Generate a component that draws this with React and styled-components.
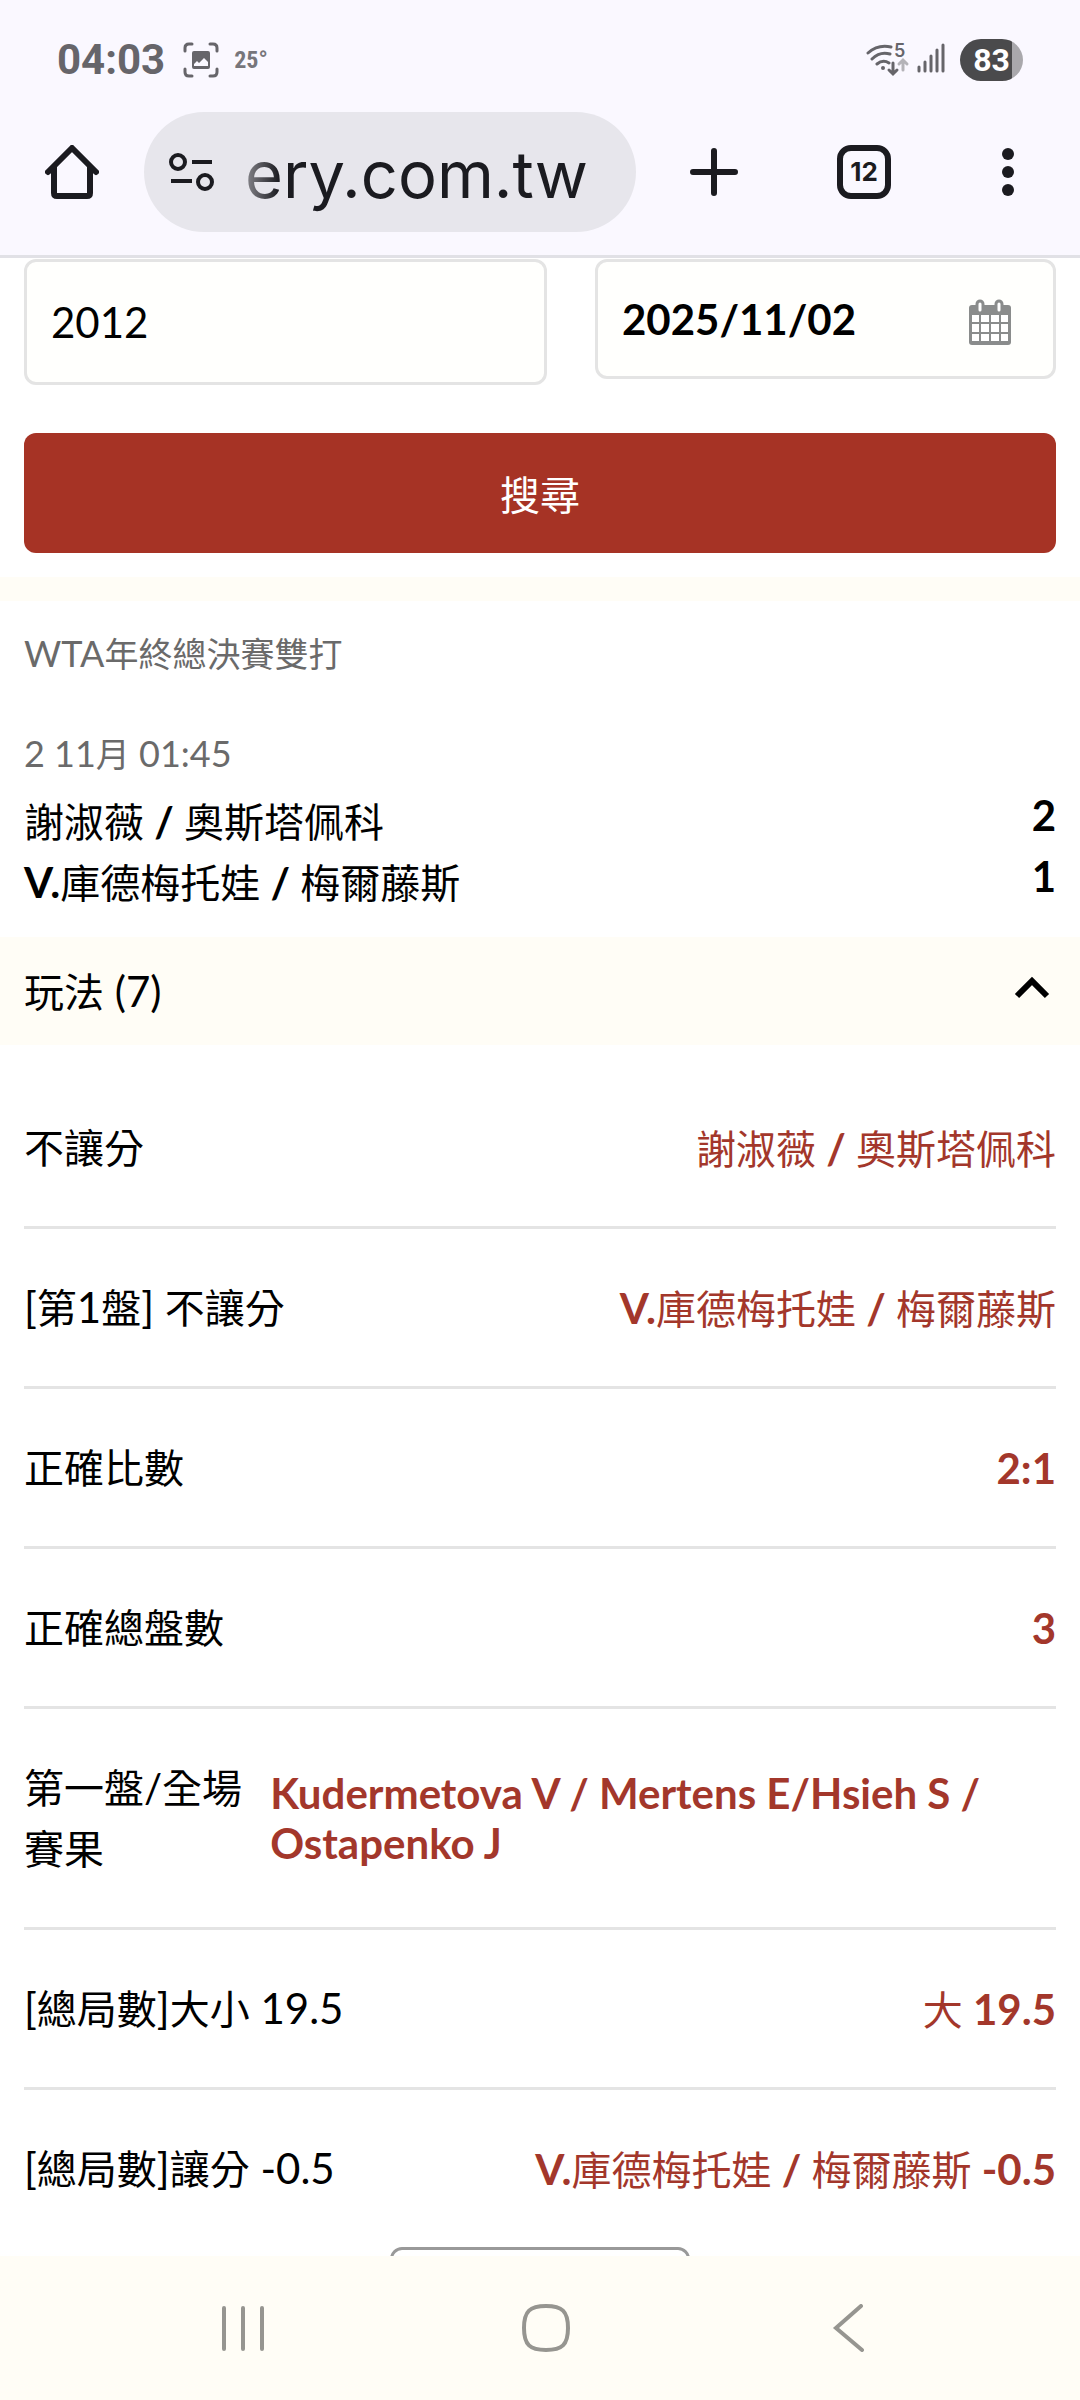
import React, { useState } from 'react';
import styled, { createGlobalStyle } from 'styled-components';

const results = [
  { label: '不讓分', value: '謝淑薇 / 奧斯塔佩科' },
  { label: '[第1盤] 不讓分', value: 'V.庫德梅托娃 / 梅爾藤斯' },
  { label: '正確比數', value: '2:1' },
  { label: '正確總盤數', value: '3' },
  { label: '第一盤/全場賽果', value: 'Kudermetova V / Mertens E/Hsieh S / Ostapenko J' },
  { label: '[總局數]大小 19.5', value: '大 19.5' },
  { label: '[總局數]讓分 -0.5', value: 'V.庫德梅托娃 / 梅爾藤斯 -0.5' },
];

// Chinese runs are set a little smaller and never bold
const Mixed = ({ text }) =>
  text
    .split(/([\u4e00-\u9fff]+(?:\/[\u4e00-\u9fff]+)*)/)
    .filter(Boolean)
    .map((run, i) => (/[\u4e00-\u9fff]/.test(run) ? <Han key={i}>{run}</Han> : run));

const StatusBar = () => (
  <Status>
    <StatusGroup>
      <Clock>04:03</Clock>
      <svg width="36" height="36" viewBox="0 0 36 36" fill="none" stroke="#66656a" strokeWidth="3" strokeLinecap="round">
        <path d="M2 9V6q0-4 4-4h3M27 2h3q4 0 4 4v3M34 27v3q0 4-4 4h-3M9 34H6q-4 0-4-4v-3" />
        <path
          d="M11 9h14q2 0 2 2v14q0 2-2 2H11q-2 0-2-2V11q0-2 2-2zM11 24h14v-4l-4-4-5 5-2-2-3 3z"
          fill="#66656a"
          fillRule="evenodd"
          stroke="none"
        />
      </svg>
      <Temperature>25°</Temperature>
    </StatusGroup>
    <StatusGroup>
      <svg width="79" height="50" viewBox="0 -8 79 50" fill="none" stroke="#66656a" strokeWidth="3" strokeLinecap="round">
        <path d="M2 10Q12 1 25 4M6 16Q14 8 24 11M11 21q6-5 12-1" />
        <circle cx="17" cy="25" r="2" fill="#66656a" stroke="none" />
        <path d="M27 20v10M23 27l4 4 4-4" />
        <path d="M37 27V18M33 21l4-4 4 4" stroke="#b4b3b8" />
        <path d="M53 28v-4M59 28v-9M65 28V13M71 28V7M77 28V2" />
        <WifiBand x="28" y="14">5</WifiBand>
      </svg>
      <Battery>83</Battery>
    </StatusGroup>
  </Status>
);

const Toolbar = () => (
  <Bar>
    <BarButton aria-label="首頁">
      <svg width="54" height="54" viewBox="0 0 54 54" fill="none" stroke="#1b1b20" strokeWidth="6" strokeLinecap="round" strokeLinejoin="round">
        <path d="M3 27L27 3l24 24M9 22v26q0 3 3 3h30q3 0 3-3V22" />
      </svg>
    </BarButton>
    <Address>
      <svg width="46" height="40" viewBox="0 0 46 40" fill="none" stroke="#1b1b20" strokeWidth="4">
        <circle cx="9" cy="10" r="7" />
        <path d="M23 10h20M2 29h21" />
        <circle cx="36" cy="30" r="7" />
      </svg>
      <Domain>ery.com.tw</Domain>
    </Address>
    <BarButton $wide aria-label="新分頁">
      <svg width="48" height="48" viewBox="0 0 48 48" stroke="#1b1b20" strokeWidth="6" strokeLinecap="round">
        <path d="M24 3v42M3 24h42" />
      </svg>
    </BarButton>
    <BarButton aria-label="切換分頁">
      <TabCount>12</TabCount>
    </BarButton>
    <BarButton aria-label="更多選項">
      <svg width="12" height="48" viewBox="0 0 12 48" fill="#1b1b20">
        <circle cx="6" cy="6" r="6" />
        <circle cx="6" cy="24" r="6" />
        <circle cx="6" cy="42" r="6" />
      </svg>
    </BarButton>
  </Bar>
);

const SearchForm = () => (
  <Form onSubmit={(e) => e.preventDefault()}>
    <Fields>
      <Field $height={126}>
        <Input aria-label="編號" defaultValue="2012" />
      </Field>
      <Field $height={120}>
        <Input $bold aria-label="日期" defaultValue="2025/11/02" />
        <CalendarButton type="button" aria-label="選擇日期">
          <svg width="42" height="46" viewBox="0 0 42 46">
            <rect y="6" width="42" height="40" rx="3" fill="#8a8c8c" />
            <path d="M11 12V5M30 12V5" stroke="#8a8c8c" strokeWidth="9" strokeLinecap="round" />
            <path d="M11 11V5M30 11V5" stroke="#fff" strokeWidth="3" strokeLinecap="round" />
            <path
              d="M3 16h7v7H3zM12 16h8v7h-8zM22 16h8v7h-8zM32 16h7v7h-7zM3 25h7v8H3zM12 25h8v8h-8zM22 25h8v8h-8zM32 25h7v8h-7zM3 35h7v7H3zM12 35h8v7h-8zM22 35h8v7h-8zM32 35h7v7h-7z"
              fill="#fff"
            />
          </svg>
        </CalendarButton>
      </Field>
    </Fields>
    <SearchButton type="submit">
      <Mixed text="搜尋" />
    </SearchButton>
  </Form>
);

const Match = () => (
  <MatchCard>
    <Meta as="h2"><Mixed text="WTA年終總決賽雙打" /></Meta>
    <Meta $spaced><Mixed text="2 11月 01:45" /></Meta>
    <Scoreboard>
      <Teams>
        <div><Mixed text="謝淑薇 / 奧斯塔佩科" /></div>
        <div><Mixed text="V.庫德梅托娃 / 梅爾藤斯" /></div>
      </Teams>
      <div>
        <div>2</div>
        <div>1</div>
      </div>
    </Scoreboard>
  </MatchCard>
);

const App = () => {
  const [open, setOpen] = useState(true);

  return (
    <Screen>
      <GlobalStyle />
      <Header>
        <StatusBar />
        <Toolbar />
      </Header>
      <Content>
        <SearchForm />
        <Divider />
        <Match />
        <Toggle aria-expanded={open} onClick={() => setOpen(!open)}>
          <span><Mixed text="玩法 (7)" /></span>
          <Chevron $open={open} width="48" height="48" viewBox="0 0 48 48" fill="none" stroke="#000" strokeWidth="6">
            <path d="M9 29l15-15 15 15" />
          </Chevron>
        </Toggle>
        {open && (
          <ResultList>
            {results.map(({ label, value }) => (
              <ResultRow key={label}>
                <Label><Mixed text={label} /></Label>
                <Value><Mixed text={value} /></Value>
              </ResultRow>
            ))}
          </ResultList>
        )}
        <MoreButton aria-label="載入更多" />
      </Content>
      <NavBar>
        <NavButton aria-label="最近">
          <svg width="48" height="48" viewBox="0 0 48 48" stroke="#969590" strokeWidth="4" strokeLinecap="round">
            <path d="M5 4v41M24 4v41M43 4v41" />
          </svg>
        </NavButton>
        <NavButton aria-label="主畫面">
          <svg width="48" height="48" viewBox="0 0 48 48" fill="none" stroke="#969590" strokeWidth="4">
            <path d="M24 2c16 0 22 5 22 22s-6 22-22 22S2 41 2 24 8 2 24 2z" />
          </svg>
        </NavButton>
        <NavButton aria-label="返回">
          <svg width="48" height="48" viewBox="0 0 48 48" fill="none" stroke="#969590" strokeWidth="4" strokeLinecap="round">
            <path d="M36 2L11 24l26 22" />
          </svg>
        </NavButton>
      </NavBar>
    </Screen>
  );
};

const GlobalStyle = createGlobalStyle`
  * {
    box-sizing: border-box;
  }

  body {
    margin: 0;
    background: #fff;
    color: #000;
    font: 42px/50px Lato, "Noto Sans CJK TC", sans-serif;
  }

  button, input {
    margin: 0;
    padding: 0;
    border: 0;
    background: none;
    color: inherit;
    font: inherit;
  }

  svg {
    display: block;
    flex: none;
  }
`;

const Screen = styled.div`
  display: flex;
  flex-direction: column;
  height: 100vh;
`;

const Header = styled.header`
  flex: none;
  padding-bottom: 23px;
  border-bottom: 3px solid #e1e1e6;
  background: #faf8ff;
`;

const Status = styled.div`
  display: flex;
  justify-content: space-between;
  align-items: center;
  height: 112px;
  padding: 8px 57px 0;
`;

const StatusGroup = styled.div`
  display: flex;
  align-items: center;
  gap: 15px;
`;

const Clock = styled.span`
  padding-right: 3px;
  color: #66656a;
  font: bold 42px/48px Roboto, sans-serif;
`;

const Temperature = styled.span`
  color: #77767b;
  font: bold 24px/36px "Roboto Condensed", Roboto, sans-serif;
`;

const WifiBand = styled.text`
  fill: #66656a;
  stroke: none;
  font: 600 18px Inter, sans-serif;
`;

const Battery = styled.span`
  width: 63px;
  border-radius: 21px;
  background: linear-gradient(to right, #4a4a4c 83%, #a9a8ac 83%);
  color: #fff;
  font: bold 32px/42px Roboto, sans-serif;
  text-align: center;
`;

const Bar = styled.div`
  display: flex;
  height: 120px;
`;

const BarButton = styled.button`
  display: flex;
  justify-content: center;
  align-items: center;
  width: ${({ $wide }) => ($wide ? 156 : 144)}px;
`;

const Address = styled.div`
  display: flex;
  flex: 1;
  align-items: center;
  justify-content: space-between;
  padding: 0 48px 0 25px;
  border-radius: 60px;
  background: #e7e6ec;
`;

const Domain = styled.span`
  padding-top: 6px;
  color: #1b1b20;
  font: 65px/80px Inter, sans-serif;
  mask-image: linear-gradient(to right, transparent -30px, #000 34px);
`;

const TabCount = styled.span`
  display: block;
  width: 54px;
  border: 6px solid #1b1b20;
  border-radius: 14px;
  color: #1b1b20;
  font: bold 26px/42px Inter, sans-serif;
  text-align: center;
`;

const Content = styled.main`
  flex: 1;
  min-height: 0;
  overflow-y: auto;
  scrollbar-width: none;
`;

const Form = styled.form`
  display: flex;
  flex-direction: column;
  gap: 48px;
  padding: 1px 24px 24px;
`;

const Fields = styled.div`
  display: grid;
  grid-template-columns: minmax(0, 523fr) minmax(0, 461fr);
  align-items: start;
  gap: 48px;
`;

const Field = styled.div`
  display: flex;
  align-items: center;
  height: ${({ $height }) => $height}px;
  padding: 0 42px 0 24px;
  border: 3px solid #e4e4e4;
  border-radius: 12px;
  background: #fffffd;
`;

const Input = styled.input`
  flex: 1;
  min-width: 0;
  height: 100%;
  outline: 0;
  font-weight: ${({ $bold }) => ($bold ? 'bold' : 'normal')};
`;

const CalendarButton = styled.button`
  flex: none;
  padding-top: 6px;
`;

const SearchButton = styled.button`
  height: 120px;
  padding-top: 2px;
  border-radius: 12px;
  background: #a63325;
  color: #fff;
`;

const Divider = styled.hr`
  height: 24px;
  margin: 0;
  border: 0;
  background: #fffdf6;
`;

const Han = styled.span`
  font-size: 40px;
  font-weight: normal;
  line-height: 1;
`;

const MatchCard = styled.section`
  padding: 24px;
`;

const Meta = styled.p`
  margin: ${({ $spaced }) => ($spaced ? '44px 0 4px' : '0')};
  color: #6a6a6a;
  font-size: 36px;
  font-weight: normal;
  line-height: 56px;

  ${Han} {
    font-size: 34px;
  }
`;

const Scoreboard = styled.div`
  display: flex;
  justify-content: space-between;
  font-weight: bold;
  line-height: 61px;
`;

const Teams = styled.div`
  padding-top: 6px;
`;

const Toggle = styled.button`
  display: flex;
  justify-content: space-between;
  align-items: center;
  width: 100%;
  height: 108px;
  padding: 0 24px;
  background: #fffdf6;
`;

const Chevron = styled.svg`
  transform: rotate(${({ $open }) => ($open ? 0 : 180)}deg);
`;

const ResultList = styled.dl`
  margin: 0;
  padding: 24px 24px 0;
`;

const ResultRow = styled.div`
  display: flex;
  justify-content: space-between;
  align-items: center;
  padding: 48px 0;

  &:not(:last-child) {
    border-bottom: 3px solid #e4e4e4;
  }
`;

const Label = styled.dt`
  line-height: 61px;
`;

const Value = styled.dd`
  margin: 0;
  color: #a3372b;
  font-weight: bold;
`;

const MoreButton = styled.button`
  display: block;
  width: 300px;
  height: 120px;
  margin: 0 auto;
  border: 3px solid #999;
  border-radius: 12px;
`;

const NavBar = styled.nav`
  display: grid;
  grid-template-columns: repeat(3, 1fr);
  flex: none;
  height: 144px;
  padding: 0 80px 0 92px;
  background: #fffdf6;
`;

const NavButton = styled.button`
  display: flex;
  justify-content: center;
  align-items: center;
`;

export default App;
